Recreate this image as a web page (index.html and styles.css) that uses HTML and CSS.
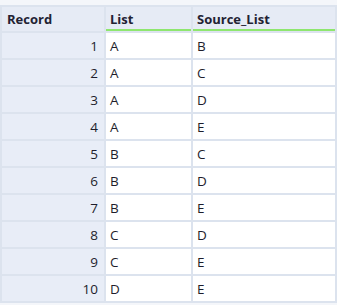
FILE: index.html
```html
<!DOCTYPE html>
<html>
<head>
<meta charset="utf-8">
<link rel="stylesheet" href="styles.css">
</head>
<body>
<table class="grid">
  <colgroup>
    <col class="c-rec"><col class="c-list"><col class="c-src">
  </colgroup>
  <thead>
    <tr>
      <th class="rec">Record</th>
      <th class="field">List</th>
      <th class="field">Source_List</th>
    </tr>
  </thead>
  <tbody>
    <tr><td class="num">1</td><td>A</td><td>B</td></tr>
    <tr><td class="num">2</td><td>A</td><td>C</td></tr>
    <tr><td class="num">3</td><td>A</td><td>D</td></tr>
    <tr><td class="num">4</td><td>A</td><td>E</td></tr>
    <tr><td class="num">5</td><td>B</td><td>C</td></tr>
    <tr><td class="num">6</td><td>B</td><td>D</td></tr>
    <tr><td class="num">7</td><td>B</td><td>E</td></tr>
    <tr><td class="num">8</td><td>C</td><td>D</td></tr>
    <tr><td class="num">9</td><td>C</td><td>E</td></tr>
    <tr><td class="num">10</td><td>D</td><td>E</td></tr>
  </tbody>
</table>
</body>
</html>
```

FILE: styles.css
```css
html, body {
  margin: 0;
  padding: 0;
  background: #f4f6fa;
}
body {
  padding-top: 5px;
  font-family: "Open Sans", "Noto Sans", sans-serif;
  color: #1e1e2c;
}
.grid {
  width: 337px;
  border-collapse: separate;
  border-spacing: 2px;
  background: #dce3ee;
  table-layout: fixed;
}
.c-rec { width: 102px; }
.c-list { width: 85px; }
.c-src { width: 142px; }
th {
  height: 24px;
  box-sizing: border-box;
  padding: 0 5px;
  background: #e6ebf5;
  font-size: 13px;
  font-weight: 700;
  text-align: left;
  color: #222233;
}
th.field {
  border-bottom: 2px solid #8ee66e;
  padding-top: 2px;
  padding-left: 4px;
}
th.rec { padding-left: 5px; }
td {
  height: 25px;
  box-sizing: border-box;
  padding: 0 4px;
  background: #ffffff;
  font-size: 13.5px;
}
td.num {
  background: #e8edf7;
  text-align: right;
  padding-right: 6px;
}
```
